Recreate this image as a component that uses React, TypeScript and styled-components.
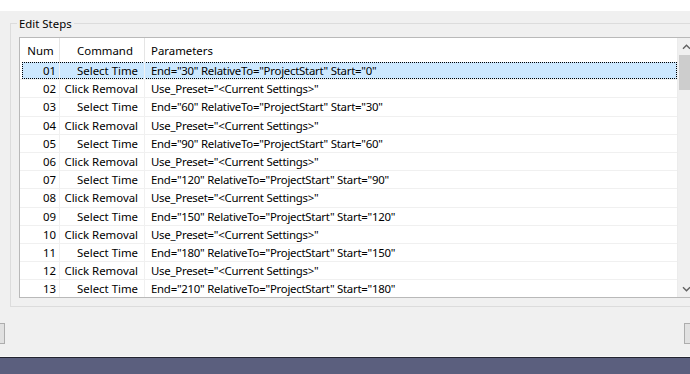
import React from 'react'
import styled, { createGlobalStyle } from 'styled-components'

const GlobalStyle = createGlobalStyle`
    html, body {
        margin: 0;
        padding: 0;
        background: #f0f0f0;
        overflow: hidden;
    }
    body {
        font-family: "Noto Sans", "Open Sans", sans-serif;
        font-size: 11.4px;
        color: #000;
    }
`

interface Step {
    num: string;
    command: string;
    params: string;
}

const steps: Step[] = Array.from({ length: 13 }, (_, i) => {
    const n = i + 1
    const num = String(n).padStart(2, '0')
    if (n % 2 === 1) {
        const k = (n + 1) / 2
        return {
            num,
            command: 'Select Time',
            params: `End="${k * 30}" RelativeTo="ProjectStart" Start="${(k - 1) * 30}"`,
        }
    }
    return { num, command: 'Click Removal', params: 'Use_Preset="<Current Settings>"' }
})

const Window = styled.div`
    width: 690px;
    height: 374px;
    display: flex;
    flex-direction: column;
    overflow: hidden;
`

const TopStrip = styled.div`
    height: 11px;
    background: #fff;
    flex-shrink: 0;
`

const Body = styled.div`
    flex: 1;
    background: #f0f0f0;
    padding: 12px 0 0 10px;
    display: flex;
    flex-direction: column;
`

const GroupBox = styled.div`
    position: relative;
    border: 1px solid #dcdcdc;
    border-right: none;
    margin-right: -40px;
    padding: 13px 0 8px 8px;
`

const Legend = styled.span`
    position: absolute;
    top: -8px;
    left: 6px;
    padding: 0 2px;
    line-height: 16px;
    background: #f0f0f0;
`

const ListView = styled.div`
    display: flex;
    width: 676px;
    height: 259px;
    border: 1px solid #b9b9b9;
    background: #fff;
`

const Grid = styled.div`
    width: 657px;
    border-right: 1px solid #ececec;
    display: flex;
    flex-direction: column;
    overflow: hidden;
`

const Row = styled.div<{ $header?: boolean; $selected?: boolean }>`
    position: relative;
    flex-shrink: 0;
    display: grid;
    grid-template-columns: 40px 85px 1fr;
    height: ${p => (p.$header ? '24px' : '18.2px')};
    border-bottom: ${p => (p.$header ? 'none' : '1px solid #f0f0f0')};
    box-sizing: border-box;
    ${p =>
        p.$selected &&
        `&::before {
            content: '';
            position: absolute;
            top: 0;
            bottom: 0;
            left: 2px;
            right: 0;
            background: #cce8ff;
            border: 1px dotted #000;
        }`}
`

const Cell = styled.div<{ $align: 'left' | 'right' | 'center'; $pad: string; $header?: boolean; $tight?: boolean }>`
    position: relative;
    display: flex;
    align-items: center;
    justify-content: ${p => (p.$align === 'left' ? 'flex-start' : p.$align === 'right' ? 'flex-end' : 'center')};
    padding: ${p => p.$pad};
    border-right: 1px solid ${p => (p.$header ? '#e5e5e5' : '#f0f0f0')};
    letter-spacing: ${p => (p.$tight ? '-0.25px' : 'normal')};
    white-space: nowrap;
    overflow: hidden;
    &:last-child {
        border-right: none;
    }
`

const ScrollBar = styled.div`
    width: 17px;
    background: #f0f0f0;
    display: flex;
    flex-direction: column;
    align-items: center;
`

const ArrowButton = styled.div`
    height: 17px;
    width: 100%;
    display: flex;
    align-items: center;
    justify-content: center;
`

const Thumb = styled.div`
    width: 15px;
    height: 35px;
    background: #cdcdcd;
`

const Track = styled.div`
    flex: 1;
`

const ButtonRow = styled.div`
    display: flex;
    justify-content: space-between;
    margin: 16px -69px 0 -10px;
`

const Button = styled.div<{ $side: 'left' | 'right' }>`
    width: 75px;
    height: 21px;
    box-sizing: border-box;
    border: 1px solid #adadad;
    background: #e1e1e1;
    margin-left: ${p => (p.$side === 'left' ? '-70px' : '0')};
`

const Spacer = styled.div`
    flex: 1;
`

const Taskbar = styled.div`
    height: 17px;
    flex-shrink: 0;
    border-top: 1px solid #f8f8f8;
    box-shadow: inset 0 1px 0 #22232f;
    background: #5b5f7e;
`

const Chevron = ({ down }: { down?: boolean }) => (
    <svg width="9" height="6" viewBox="0 0 9 6">
        <path
            d={down ? 'M1 1.2 L4.5 4.7 L8 1.2' : 'M1 4.8 L4.5 1.3 L8 4.8'}
            fill="none"
            stroke="#606060"
            strokeWidth="1.4"
        />
    </svg>
)

const App = () => (
    <Window>
        <GlobalStyle />
        <TopStrip />
        <Body>
            <GroupBox>
                <Legend>Edit Steps</Legend>
                <ListView>
                    <Grid>
                        <Row $header>
                            <Cell $header $align="center" $pad="0 0 0 2px">Num</Cell>
                            <Cell $header $align="center" $pad="0 0 0 6px">Command</Cell>
                            <Cell $header $align="left" $pad="0 0 0 6px">Parameters</Cell>
                        </Row>
                        {steps.map((s, i) => (
                            <Row key={s.num} $selected={i === 0}>
                                <Cell $align="right" $pad="0 3px 0 0">{s.num}</Cell>
                                <Cell $align="right" $pad="0 6px 0 0">{s.command}</Cell>
                                <Cell $align="left" $pad="0 0 0 6px" $tight>{s.params}</Cell>
                            </Row>
                        ))}
                    </Grid>
                    <ScrollBar>
                        <ArrowButton><Chevron /></ArrowButton>
                        <Thumb />
                        <Track />
                        <ArrowButton><Chevron down /></ArrowButton>
                    </ScrollBar>
                </ListView>
            </GroupBox>
            <ButtonRow>
                <Button $side="left" />
                <Button $side="right" />
            </ButtonRow>
            <Spacer />
        </Body>
        <Taskbar />
    </Window>
)

export default App
